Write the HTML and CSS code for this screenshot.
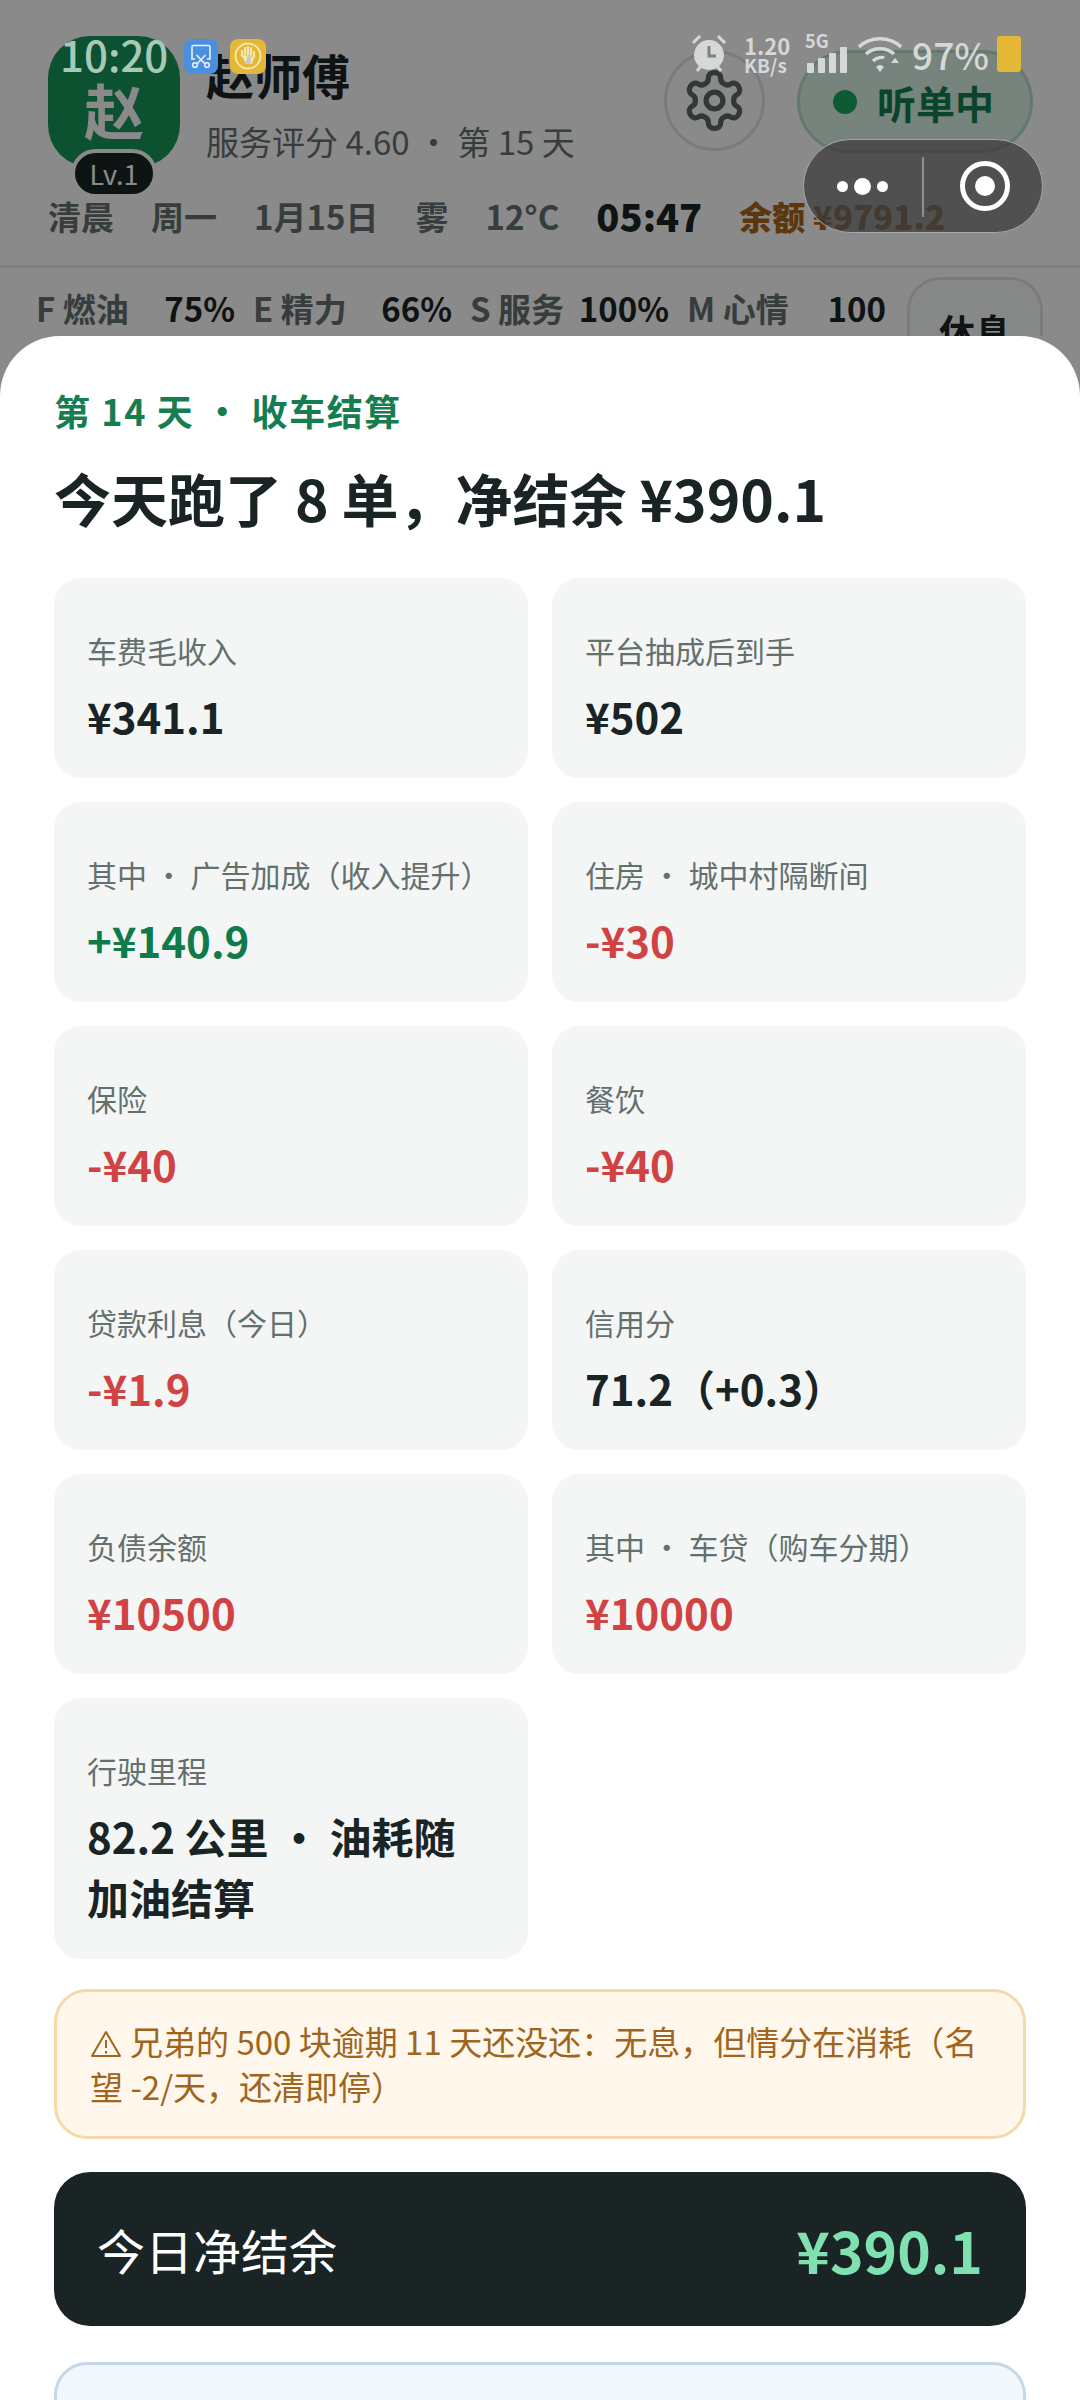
FILE: index.html
```html
<!DOCTYPE html>
<html lang="zh-CN">
<head>
    <meta charset="UTF-8">
    <meta name="viewport" content="width=device-width, initial-scale=1.0">
    <title>收车结算</title>
    <link rel="stylesheet" href="styles.css">
</head>
<body>
    <!-- game header, sits under the scrim -->
    <header class="top">
        <div class="profile">
            <div class="avatar">
                <span class="avatar-char">赵</span>
                <span class="level">Lv.1</span>
            </div>
            <div class="who">
                <div class="name">赵师傅</div>
                <div class="sub">服务评分 4.60 ・ 第 15 天</div>
            </div>
            <button class="gear">
                <svg width="67" height="67" viewBox="0 0 24 24" fill="none" stroke="#5c6664" stroke-width="1.9"><path d="M12.22 2h-.44a2 2 0 0 0-2 2v.18a2 2 0 0 1-1 1.73l-.43.25a2 2 0 0 1-2 0l-.15-.08a2 2 0 0 0-2.73.73l-.22.38a2 2 0 0 0 .73 2.73l.15.1a2 2 0 0 1 1 1.72v.51a2 2 0 0 1-1 1.74l-.15.09a2 2 0 0 0-.73 2.73l.22.38a2 2 0 0 0 2.73.73l.15-.08a2 2 0 0 1 2 0l.43.25a2 2 0 0 1 1 1.73V20a2 2 0 0 0 2 2h.44a2 2 0 0 0 2-2v-.18a2 2 0 0 1 1-1.73l.43-.25a2 2 0 0 1 2 0l.15.08a2 2 0 0 0 2.73-.73l.22-.39a2 2 0 0 0-.73-2.73l-.15-.08a2 2 0 0 1-1-1.74v-.5a2 2 0 0 1 1-1.74l.15-.09a2 2 0 0 0 .73-2.73l-.22-.38a2 2 0 0 0-2.73-.73l-.15.08a2 2 0 0 1-2 0l-.43-.25a2 2 0 0 1-1-1.73V4a2 2 0 0 0-2-2z"/><circle cx="12" cy="12" r="3"/></svg>
            </button>
            <div class="listen"><i class="dot"></i>听单中</div>
        </div>
        <div class="info">
            <span>清晨</span><span>周一</span><span>1月15日</span><span>雾</span><span>12°C</span>
            <b class="clock">05:47</b>
            <b class="money">余额 ¥9791.2</b>
        </div>
        <div class="stats">
            <div class="stat"><span class="stat-key">F 燃油</span><b class="stat-val">75%</b></div>
            <div class="stat"><span class="stat-key">E 精力</span><b class="stat-val">66%</b></div>
            <div class="stat"><span class="stat-key">S 服务</span><b class="stat-val">100%</b></div>
            <div class="stat"><span class="stat-key">M 心情</span><b class="stat-val">100</b></div>
            <button class="rest">休息</button>
        </div>
    </header>

    <div class="scrim"></div>

    <!-- phone status bar -->
    <div class="status">
        <div class="status-left">
            <span class="time">10:20</span>
            <span class="app-ico blue">
                <svg width="26" height="26" viewBox="0 0 26 26" fill="none" stroke="#e8f0fb" stroke-width="1.6"><path d="M7 16 H4 V4 a1.5 1.5 0 0 1 1.5 -1.5 H20.500 A1.500 1.500 0 0 1 22 4 V16 H19"/><path d="M8.500 12 L17 21 M17.500 12 L9 21"/><circle cx="7" cy="22" r="2.300"/><circle cx="19" cy="22" r="2.300"/></svg>
            </span>
            <span class="app-ico yellow">
                <svg width="30" height="30" viewBox="0 0 30 30" fill="none"><circle cx="15" cy="15" r="12.500" stroke="#f6e7b4" stroke-width="1.800"/><path d="M9 15 V10 M12 14 V7 M15 14 V6 M18 14 V7 M21 16 V11" stroke="#f6e7b4" stroke-width="2.200" stroke-linecap="round"/><path d="M8.500 14 L13 23 H19 L21 16 Z" fill="#f6e7b4"/><path d="M15 14 a3 3 0 0 1 3 3 v6 h-6 z" fill="#c9c9c9"/></svg>
            </span>
        </div>
        <div class="status-right">
            <svg class="alarm" width="36" height="38" viewBox="0 0 34 38" fill="#d6d8d7"><circle cx="17" cy="20" r="15"/><path d="M1 8 L8 1 M33 8 L26 1 M5 36 L9 31 M29 36 L25 31" stroke="#d6d8d7" stroke-width="3"/><path d="M17 11 V21 H24" fill="none" stroke="#7d8180" stroke-width="3"/></svg>
            <span class="speed">1.20<small>KB/s</small></span>
            <span class="net">
                <em>5G</em>
                <svg width="40" height="26" viewBox="0 0 40 26" fill="#d6d8d7"><rect x="0" y="16" width="7" height="10" rx="1"/><rect x="11" y="11" width="7" height="15" rx="1"/><rect x="22" y="6" width="7" height="20" rx="1"/><rect x="33" y="0" width="7" height="26" rx="1"/></svg>
            </span>
            <svg class="wifi" width="44" height="36" viewBox="0 0 44 36" fill="none" stroke="#d6d8d7" stroke-width="3.400"><path d="M1 11 C12 0 32 0 43 11"/><path d="M8 18 C15 11 29 11 36 18"/><path d="M15 25 C19 21 25 21 26 22"/><path d="M18 31 L22 36 L26 31 Q22 27 18 31 Z" fill="#d6d8d7" stroke="none"/><path d="M33 27 L37 22 L41 27 Z" fill="#d6d8d7" stroke="none"/></svg>
            <span class="pct">97%</span>
            <span class="battery"></span>
        </div>
    </div>

    <!-- mini program capsule -->
    <div class="capsule">
        <div class="capsule-more"><i></i><i class="big"></i><i></i></div>
        <div class="capsule-close"><i></i></div>
    </div>

    <section class="sheet">
        <div class="eyebrow">第 14 天 ・ 收车结算</div>
        <h1 class="title">今天跑了 8 单，净结余 ¥390.1</h1>
        <div class="grid">
            <div class="card"><div class="label">车费毛收入</div><div class="value">¥341.1</div></div>
            <div class="card"><div class="label">平台抽成后到手</div><div class="value">¥502</div></div>
            <div class="card"><div class="label">其中 ・ 广告加成（收入提升）</div><div class="value green">+¥140.9</div></div>
            <div class="card"><div class="label">住房 ・ 城中村隔断间</div><div class="value red">-¥30</div></div>
            <div class="card"><div class="label">保险</div><div class="value red">-¥40</div></div>
            <div class="card"><div class="label">餐饮</div><div class="value red">-¥40</div></div>
            <div class="card"><div class="label">贷款利息（今日）</div><div class="value red">-¥1.9</div></div>
            <div class="card"><div class="label">信用分</div><div class="value">71.2（+0.3）</div></div>
            <div class="card"><div class="label">负债余额</div><div class="value red">¥10500</div></div>
            <div class="card"><div class="label">其中 ・ 车贷（购车分期）</div><div class="value red">¥10000</div></div>
            <div class="card"><div class="label">行驶里程</div><div class="value">82.2 公里 ・ 油耗随加油结算</div></div>
        </div>
        <div class="warn">
            <svg class="warn-ico" width="32" height="30" viewBox="0 0 32 30" fill="none" stroke="#a0651c" stroke-width="2"><path d="M16 3 L30 27 H2 Z" stroke-linejoin="round"/><path d="M16 11 V19 M16 22 V24.500"/></svg>兄弟的 500 块逾期 11 天还没还：无息，但情分在消耗（名望 -2/天，还清即停）
        </div>
        <div class="net-bar">
            <span>今日净结余</span>
            <b>¥390.1</b>
        </div>
        <div class="note"></div>
    </section>
</body>
</html>
```

FILE: styles.css
```css
* {
    margin: 0;
    padding: 0;
    box-sizing: border-box;
}
body {
    position: relative;
    width: 1080px;
    height: 2400px;
    overflow: hidden;
    background: #fbfbfb;
    color: #1a2424;
    font-family: "Noto Sans CJK SC", "Noto Sans", sans-serif;
}
button {
    font-family: inherit;
}

/* header under the scrim */
.top {
    height: 336px;
    overflow: hidden;
    padding-top: 36px;
}
.profile {
    display: flex;
    align-items: flex-start;
    padding-left: 48px;
    height: 143px;
}
.avatar {
    position: relative;
    flex: none;
    width: 132px;
    height: 131px;
    border-radius: 42px;
    background: #169659;
    color: #fbfbfb;
    display: flex;
    align-items: center;
    justify-content: center;
}
.avatar-char {
    font-size: 60px;
    font-weight: 700;
    line-height: 1;
    margin-top: 14px;
}
.level {
    position: absolute;
    left: 23px;
    top: 113px;
    width: 86px;
    height: 49px;
    border-radius: 25px;
    border: 4px solid #fbfbfb;
    background: #1a2424;
    font-size: 27px;
    line-height: 41px;
    text-align: center;
    color: #fff;
}
.who {
    flex: none;
    margin-left: 26px;
    width: 458px;
}
.name {
    font-size: 48px;
    font-weight: 700;
    line-height: 64px;
    margin-top: 6px;
}
.sub {
    font-size: 33px;
    line-height: 48px;
    color: #64706d;
    margin-top: 11px;
    white-space: nowrap;
}
.gear {
    flex: none;
    width: 101px;
    height: 101px;
    margin-top: 14px;
    border-radius: 50%;
    border: 3px solid #dde2e0;
    background: transparent;
    display: flex;
    align-items: center;
    justify-content: center;
}
.listen {
    flex: none;
    width: 236px;
    height: 103px;
    margin: 14px 0 0 32px;
    border-radius: 52px;
    border: 3px solid #b4dcc6;
    background: #d9eee3;
    color: #127f4d;
    font-size: 39px;
    font-weight: 700;
    display: flex;
    align-items: center;
    justify-content: center;
    gap: 20px;
    padding-right: 3px;
}
.dot {
    width: 24px;
    height: 24px;
    border-radius: 50%;
    background: #1aa562;
}
.info {
    display: flex;
    align-items: center;
    gap: 37px;
    height: 89px;
    padding: 0 0 13px 48px;
    border-bottom: 3px solid #e6e8e7;
    font-size: 33px;
    font-weight: 700;
    color: #64706d;
    white-space: nowrap;
}
.clock {
    font-size: 38px;
    color: #1a2424;
}
.money {
    color: #a8651a;
    font-size: 33px;
}
.stats {
    display: flex;
    align-items: flex-start;
    gap: 18px;
    padding-left: 36px;
    font-size: 33px;
    white-space: nowrap;
}
.stat {
    width: 199px;
    display: flex;
    justify-content: space-between;
    line-height: 48px;
    margin-top: 16px;
}
.stat-key {
    font-weight: 700;
    color: #64706d;
}
.rest {
    width: 136px;
    height: 106px;
    margin: 9px 0 0 3px;
    border-radius: 33px;
    border: 3px solid #dde2e0;
    background: #f4f6f6;
    color: #1a2424;
    font-size: 36px;
    font-weight: 700;
}
.scrim {
    position: absolute;
    inset: 0;
    background: rgba(0, 0, 0, 0.45);
}

/* status bar */
.status {
    position: absolute;
    left: 0;
    top: 28px;
    width: 1080px;
    height: 52px;
    display: flex;
    justify-content: space-between;
    align-items: center;
    color: #d6d8d7;
    padding: 0 59px 0 60px;
}
.status-left {
    display: flex;
    align-items: center;
}
.time {
    font-size: 42px;
    font-weight: 500;
    line-height: 52px;
    color: #a8c9b9;
}
.app-ico {
    width: 34px;
    height: 35px;
    border-radius: 8px;
    display: flex;
    align-items: center;
    justify-content: center;
    margin-left: 12px;
    margin-top: 4px;
}
.app-ico.blue {
    background: #4a8fe0;
    margin-left: 16px;
}
.yellow {
    width: 36px;
    background: #e5b736;
}
.status-right {
    display: flex;
    align-items: center;
}
.alarm {
    margin-right: 17px;
}
.speed {
    font-size: 22px;
    font-weight: 700;
    line-height: 22px;
    width: 44px;
    display: flex;
    flex-direction: column;
}
.speed small {
    font-size: 19px;
    line-height: 18px;
}
.net {
    position: relative;
    width: 44px;
    height: 38px;
    margin-left: 19px;
    display: flex;
    align-items: flex-end;
}
.net em {
    position: absolute;
    left: -2px;
    top: -4px;
    font-size: 18px;
    font-style: normal;
    font-weight: 700;
    line-height: 18px;
}
.wifi {
    margin-left: 7px;
}
.pct {
    font-size: 37px;
    font-weight: 500;
    margin-left: 10px;
    color: #d6d8d7;
}
.battery {
    width: 24px;
    height: 36px;
    margin-left: 8px;
    background: #e5b736;
    border-radius: 3px;
}

/* capsule */
.capsule {
    position: absolute;
    left: 803px;
    top: 139px;
    width: 240px;
    height: 94px;
    border-radius: 47px;
    border: 1px solid #a5a8a7;
    background: rgba(60, 60, 60, 0.75);
    display: flex;
}
.capsule-more {
    width: 120px;
    display: flex;
    align-items: center;
    justify-content: center;
    gap: 6px;
    position: relative;
    padding-right: 4px;
}
.capsule-more::after {
    content: "";
    position: absolute;
    right: 0;
    top: 17px;
    height: 60px;
    width: 2px;
    background: #8d8f8e;
}
.capsule-more i {
    width: 11px;
    height: 11px;
    border-radius: 50%;
    background: #fff;
}
.capsule-more i.big {
    width: 17px;
    height: 17px;
}
.capsule-close {
    flex: 1;
    display: flex;
    align-items: center;
    justify-content: center;
    padding-left: 4px;
}
.capsule-close i {
    width: 50px;
    height: 50px;
    border-radius: 50%;
    border: 5px solid #fff;
    display: flex;
    align-items: center;
    justify-content: center;
}
.capsule-close i::after {
    content: "";
    width: 20px;
    height: 20px;
    border-radius: 50%;
    background: #fff;
}

/* settlement sheet */
.sheet {
    position: absolute;
    left: 0;
    top: 336px;
    width: 1080px;
    height: 2064px;
    overflow: hidden;
    background: #fff;
    border-radius: 60px 60px 0 0;
    padding: 50px 54px 0;
}
.eyebrow {
    font-size: 36px;
    font-weight: 700;
    letter-spacing: 1.6px;
    line-height: 48px;
    color: #167d51;
    white-space: nowrap;
}
.title {
    font-size: 57px;
    font-weight: 700;
    line-height: 80px;
    margin-top: 23px;
    white-space: nowrap;
}
.grid {
    display: grid;
    grid-template-columns: 474px 474px;
    gap: 24px;
    margin-top: 41px;
}
.card {
    background: #f4f6f6;
    border-radius: 27px;
    padding: 48px 33px 32px;
}
.label {
    font-size: 30px;
    line-height: 48px;
    color: #64706d;
    white-space: nowrap;
}
.value {
    font-size: 42px;
    font-weight: 700;
    line-height: 61px;
    margin-top: 11px;
}
.green {
    color: #0f7a4a;
}
.red {
    color: #d14343;
}
.warn {
    margin-top: 30px;
    padding: 27px 33px;
    background: #fff7ec;
    border: 3px solid #f5d9a8;
    border-radius: 33px;
    color: #a0651c;
    font-size: 33px;
    line-height: 45px;
}
.warn-ico {
    vertical-align: -4px;
    margin-right: 8px;
}
.net-bar {
    height: 154px;
    margin-top: 33px;
    border-radius: 36px;
    background: #1a2424;
    padding: 0 43px;
    display: flex;
    align-items: center;
    justify-content: space-between;
    color: #fff;
    font-size: 48px;
}
.net-bar b {
    font-size: 57px;
    color: #7fe0b0;
}
.note {
    height: 120px;
    margin-top: 36px;
    background: #f2f7fd;
    border: 3px solid #c5d8e8;
    border-radius: 33px;
}
```
